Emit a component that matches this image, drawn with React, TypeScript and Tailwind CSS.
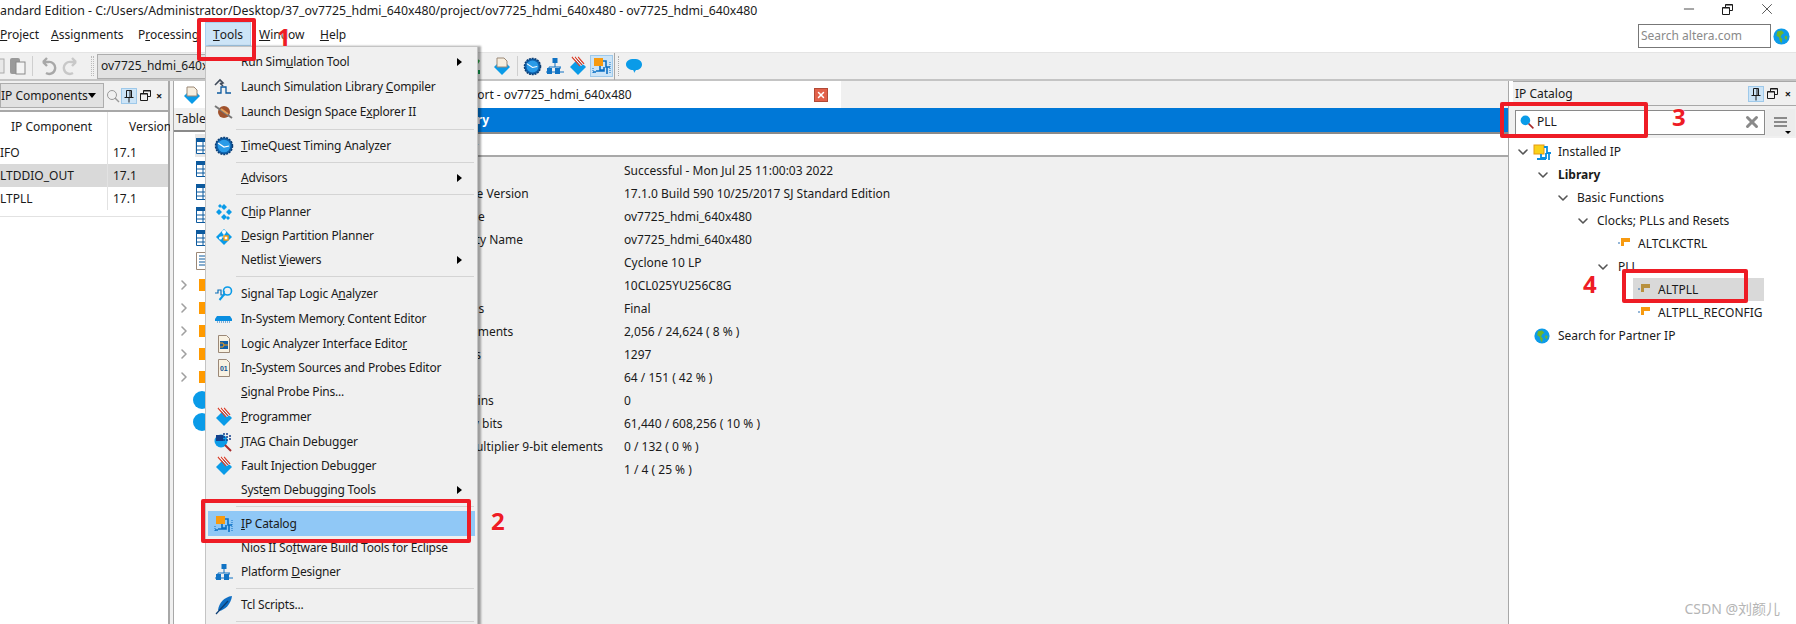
import { ReactNode } from "react";
import { ChevronDown, ChevronRight, Minus, X } from "lucide-react";

// menu text: "&" marks the mnemonic letter
function Label({ text }: { text: string }) {
  const i = text.indexOf("&");
  if (i < 0) return <>{text}</>;
  return (
    <>
      {text.slice(0, i)}
      <u>{text[i + 1]}</u>
      {text.slice(i + 2)}
    </>
  );
}

function Ic({ children, size = 20 }: { children: ReactNode; size?: number }) {
  return (
    <svg width={size} height={size} viewBox="0 0 20 20" className="shrink-0">
      {children}
    </svg>
  );
}

const ClockIcon = ({ size = 20 }: { size?: number }) => (
  <Ic size={size}>
    <circle cx="10" cy="10" r="8.5" fill="#0f5fa8" stroke="#0b3d73" strokeWidth="1.5" strokeDasharray="2 1" />
    <circle cx="10" cy="10" r="6.3" fill="#2a9be8" />
    <path d="M4 7l6 4 5-1" stroke="#fff" strokeWidth="1.2" fill="none" />
  </Ic>
);

const DiamondBase = ({ children }: { children?: ReactNode }) => (
  <Ic>
    <path d="M10 3l8 8-8 8-8-8z" fill="#0a9be8" />
    {children}
  </Ic>
);

const CompileIcon = () => (
  <DiamondBase>
    <path d="M5 2h7l3 3v6H5z" fill="#f6eedf" stroke="#9b8877" />
  </DiamondBase>
);

const ProgrammerIcon = () => (
  <DiamondBase>
    <path d="M4 1l8 9 M7 1l7 8 M10 1l6 7" stroke="#d9442f" strokeWidth="1.3" />
    <path d="M5.5 1l8 9 M8.5 1l7 8" stroke="#fff" strokeWidth="1" />
  </DiamondBase>
);

const HierarchyIcon = () => (
  <Ic>
    <path d="M10 7v4M4 11h12M4 11v2M15 11v2M1 16h18" stroke="#1173c4" strokeWidth="1" fill="none" />
    <rect x="7.5" y="2" width="5" height="5" fill="#1173c4" />
    <rect x="2" y="12" width="5" height="6" fill="#1173c4" />
    <rect x="10" y="12" width="5" height="6" fill="#1173c4" />
  </Ic>
);

const IpIcon = () => (
  <Ic>
    <rect x="2" y="2" width="9" height="8" fill="#f79a10" />
    <path d="M11 5h3v6h4M8 10v4h4v-3M4 15h8v-1M1 16h3M15 18v-7" stroke="#0a6fc4" strokeWidth="1.6" fill="none" />
    <path d="M1 12v6M18 6v12" stroke="#0a6fc4" strokeWidth="1" strokeDasharray="1 1" />
  </Ic>
);

const InstalledIcon = () => (
  <Ic>
    <rect x="1" y="3" width="10" height="9" fill="#f9d21a" stroke="#e59a10" />
    <path d="M11 5h3v6h4M8 12v4h5v-5M4 17h9M16 18v-7" stroke="#0a8ee0" strokeWidth="1.8" fill="none" />
  </Ic>
);

const GlobeIcon = ({ size = 20 }: { size?: number }) => (
  <Ic size={size}>
    <circle cx="10" cy="10" r="9.5" fill="#0d9be8" />
    <path d="M5 4l5-1 3 3-3 2-1 3 2 2-1 5-2-3-1-4-3-2z" fill="#6cb52d" />
    <path d="M14 9l3 1-1 4-2-2z" fill="#6cb52d" />
  </Ic>
);

const SearchBlue = () => (
  <Ic size={16}>
    <circle cx="8" cy="8" r="6" fill="#0a9be8" />
    <path d="M12 12l6 6" stroke="#a82a2a" strokeWidth="2" />
  </Ic>
);

const PinIcon = () => (
  <svg width="14" height="14" viewBox="0 0 14 14" className="shrink-0">
    <path d="M4.5 1.5h5v7h-5zM2.5 8.5h9M7 9v4.5M8 2v6" stroke="#1a1a1a" fill="none" />
  </svg>
);

const RestoreIcon = () => (
  <svg width="11" height="11" viewBox="0 0 11 11" className="shrink-0">
    <path d="M3.5 3V.5h7v6H8M.5 3.5h7v7h-7z" stroke="#1a1a1a" fill="none" />
    <path d="M3.5 1h7M.5 4h7" stroke="#1a1a1a" />
  </svg>
);

const IpBlock = ({ dim }: { dim?: boolean }) => (
  <svg width="12" height="14" viewBox="0 0 12 14" className="shrink-0">
    <path d="M3 1h9v4H6v4H3z" fill={dim ? "#b8913f" : "#f79a10"} />
    <path d="M0 6h2" stroke="#2a6fb0" />
  </svg>
);

const TableIcon = () => (
  <svg width="14" height="16" viewBox="0 0 14 16" className="shrink-0">
    <path d="M.5.5h13v15H.5z" fill="#fff" stroke="#0d5a9e" />
    <path d="M0 0h14v4H0z" fill="#0d5a9e" />
    <path d="M0 8h14M0 12h14M7 4v12" stroke="#0d5a9e" />
  </svg>
);

type MenuRow =
  | { sep: true; h: number }
  | { sep?: false; label: string; h: number; icon?: ReactNode; sub?: boolean; active?: boolean };

const menu: MenuRow[] = [
  { label: "Run Sim&ulation Tool", h: 24, sub: true },
  {
    label: "Launch Simulation Library &Compiler",
    h: 25,
    icon: (
      <Ic>
        <path d="M3 16h4v-6h5v6h5" stroke="#0d5a9e" strokeWidth="1.3" fill="none" />
        <path d="M1 8l5-5 3 3-3 1 M6 6l3 3" stroke="#3f4a5a" strokeWidth="1.6" fill="none" />
      </Ic>
    ),
  },
  {
    label: "Launch Design Space E&xplorer II",
    h: 25,
    icon: (
      <Ic>
        <circle cx="10" cy="10" r="6" fill="#a0522d" />
        <path d="M1 4l17 12" stroke="#777" strokeWidth="2" />
        <path d="M7 7l7 5" stroke="#e8a05a" strokeWidth="2" />
      </Ic>
    ),
  },
  { sep: true, h: 10 },
  { label: "&TimeQuest Timing Analyzer", h: 24, icon: <ClockIcon /> },
  { sep: true, h: 8 },
  { label: "&Advisors", h: 24, sub: true },
  { sep: true, h: 9 },
  {
    label: "C&hip Planner",
    h: 25,
    icon: (
      <Ic>
        <g fill="#0a9be8">
          <path d="M10 2l3 3-3 3-3-3zM5 7l3 3-3 3-3-3zM15 7l3 3-3 3-3-3zM10 12l3 3-3 3-3-3z" />
          <path d="M6 2l2 2-2 2-2-2zM14 14l2 2-2 2-2-2z" />
        </g>
      </Ic>
    ),
  },
  {
    label: "&Design Partition Planner",
    h: 24,
    icon: (
      <DiamondBase>
        <path d="M10 6v5M7 11h6" stroke="#fff" />
        <circle cx="10" cy="6" r="2" fill="#fff" />
        <rect x="10" y="10" width="4" height="4" fill="#fff" stroke="#f79a10" strokeWidth="1.4" />
        <circle cx="6.5" cy="12" r="1.5" fill="#fff" />
      </DiamondBase>
    ),
  },
  { label: "Netlist &Viewers", h: 24, sub: true },
  { sep: true, h: 9 },
  {
    label: "Signal Tap Logic A&nalyzer",
    h: 25,
    icon: (
      <Ic>
        <path d="M1 9h3v-3h3v5h3V7" stroke="#0d6fb8" strokeWidth="1.2" fill="none" />
        <circle cx="13.5" cy="7" r="4" fill="none" stroke="#0a9be8" strokeWidth="1.6" />
        <path d="M10.5 10l-5 6" stroke="#0a9be8" strokeWidth="2" />
      </Ic>
    ),
  },
  {
    label: "In-System Memor&y Content Editor",
    h: 25,
    icon: (
      <Ic>
        <path d="M3 7h13l2 3v2H1v-2z" fill="#0a8ee0" />
        <path d="M3 13h13" stroke="#0a6fc4" strokeDasharray="1 1" />
      </Ic>
    ),
  },
  {
    label: "Logic Analyzer Interface Edito&r",
    h: 25,
    icon: (
      <Ic>
        <path d="M4.5 1.5h8l3 3v14h-11z" fill="#f8f1e2" stroke="#9b8877" />
        <rect x="6" y="7" width="8" height="8" fill="#0f5fa8" />
        <path d="M6 9h3l1 2h4M6 13h3l1-2" stroke="#f79a10" fill="none" />
      </Ic>
    ),
  },
  {
    label: "In&-System Sources and Probes Editor",
    h: 24,
    icon: (
      <Ic>
        <path d="M4.5 1.5h8l3 3v14h-11z" fill="#f8f1e2" stroke="#9b8877" />
        <text x="6" y="13" fontSize="7" fontWeight="700" fill="#0f4f8f" fontFamily="Liberation Sans">01</text>
      </Ic>
    ),
  },
  { label: "&Signal Probe Pins...", h: 24 },
  { label: "&Programmer", h: 25, icon: <ProgrammerIcon /> },
  {
    label: "&JTAG Chain Debugger",
    h: 25,
    icon: (
      <Ic>
        <circle cx="7" cy="9" r="6.5" fill="#0a9be8" />
        <path d="M2 3h7v6H2z" fill="#123f8a" />
        <path d="M10 1v8M13 1v8M16 3v6" stroke="#123f8a" strokeWidth="1.5" strokeDasharray="2 1" />
        <path d="M11 13l6 6" stroke="#a82a2a" strokeWidth="2" />
      </Ic>
    ),
  },
  { label: "Fault Injection Debugger", h: 24, icon: <ProgrammerIcon /> },
  { label: "Syst&em Debugging Tools", h: 24, sub: true },
  { sep: true, h: 9 },
  { label: "&IP Catalog", h: 25, icon: <IpIcon />, active: true },
  { label: "Nios II So&ftware Build Tools for Eclipse", h: 24 },
  { label: "Platform &Designer", h: 24, icon: <HierarchyIcon /> },
  { sep: true, h: 8 },
  {
    label: "Tcl Scripts...",
    h: 25,
    icon: (
      <Ic>
        <path d="M18 1C10 2 5 8 4 15l1 1C11 15 17 9 18 1z" fill="#0f6fc4" />
        <path d="M2 19L14 6" stroke="#0b3d73" strokeWidth="1.2" />
      </Ic>
    ),
  },
  { sep: true, h: 8 },
];

const summary = [
  ["Flow Status", "Successful - Mon Jul 25 11:00:03 2022"],
  ["Quartus Prime Version", "17.1.0 Build 590 10/25/2017 SJ Standard Edition"],
  ["Revision Name", "ov7725_hdmi_640x480"],
  ["Top-level Entity Name", "ov7725_hdmi_640x480"],
  ["Family", "Cyclone 10 LP"],
  ["Device", "10CL025YU256C8G"],
  ["Timing Models", "Final"],
  ["Total logic elements", "2,056 / 24,624 ( 8 % )"],
  ["Total registers", "1297"],
  ["Total pins", "64 / 151 ( 42 % )"],
  ["Total virtual pins", "0"],
  ["Total memory bits", "61,440 / 608,256 ( 10 % )"],
  ["Embedded Multiplier 9-bit elements", "0 / 132 ( 0 % )"],
  ["Total PLLs", "1 / 4 ( 25 % )"],
];

const ipRows = [
  ["IFO", false],
  ["LTDDIO_OUT", true],
  ["LTPLL", false],
] as const;

function TreeChevron({ open }: { open?: boolean }) {
  const Cmp = open ? ChevronDown : ChevronRight;
  return <Cmp size={16} strokeWidth={2.4} className={open ? "text-[#555]" : "text-[#a0a0a0]"} />;
}

function CatalogRow({ indent, children }: { indent: string; children: ReactNode }) {
  return <div className={`h-[23px] flex items-center ${indent}`}>{children}</div>;
}

export default function App() {
  return (
    <div className="relative w-[1796px] h-[624px] overflow-hidden bg-white text-[12px] text-[#1a1a1a] font-['Noto_Sans',sans-serif]">
      {/* title bar */}
      <div className="h-[22px] flex items-center text-[12.3px] whitespace-nowrap">
        <span className="flex-1">
          andard Edition - C:/Users/Administrator/Desktop/37_ov7725_hdmi_640x480/project/ov7725_hdmi_640x480 - ov7725_hdmi_640x480
        </span>
        <div className="flex items-center gap-[25px] pr-[20px] -mt-[4px] text-[#222]">
          <Minus size={16} strokeWidth={1.2} />
          <RestoreIcon />
          <X size={18} strokeWidth={1} />
        </div>
      </div>

      {/* menu bar */}
      <div className="h-[30px] flex items-start">
        <div className="flex items-center h-[26px]">
          <span className="w-[51px]">
            <u>P</u>roject
          </span>
          <span className="w-[87px]">
            <u>A</u>ssignments
          </span>
          <span className="w-[67px]">
            P<u>r</u>ocessing
          </span>
          <span className="w-[46px] h-[24px] -mt-[2px] pt-[1px] flex items-center justify-center bg-[#cce4f7] border border-[#a8d0f0]">
            <u>T</u>ools
          </span>
          <span className="ml-[8px] w-[61px]">
            <u>W</u>indow
          </span>
          <span>
            <u>H</u>elp
          </span>
        </div>
        <div className="ml-auto flex items-center gap-[2px] pr-[6px] mt-[2px]">
          <div className="w-[133px] h-[24px] border border-[#777] flex items-center px-[2px] text-[#8a8a8a] text-[12px]">
            Search altera.com
          </div>
          <GlobeIcon size={17} />
        </div>
      </div>

      {/* toolbar */}
      <div className="h-[29px] bg-[#f0f0f0] border-t border-[#e4e4e4] border-b-2 border-b-[#c4c4c4] flex items-center">
        <svg width="30" height="20" viewBox="0 0 30 20" className="shrink-0">
          <rect x="-4" y="3" width="8" height="14" fill="#e8e8e8" stroke="#aaa" />
          <rect x="10" y="2" width="10" height="16" rx="2" fill="#9a9a9a" />
          <rect x="16" y="6" width="9" height="12" fill="#f4f4f4" stroke="#8a8a8a" />
        </svg>
        <div className="ml-[2px] w-px h-[20px] bg-[#cfcfcf]" />
        <svg width="50" height="20" viewBox="0 0 50 20" className="ml-[5px] shrink-0">
          <path d="M5 6l4-4M5 6l4 4M5 6h5a6 6 0 1 1-2 11" stroke="#a8a8a8" strokeWidth="2.4" fill="none" />
          <path d="M38 6l-4-4M38 6l-4 4M38 6h-5a6 6 0 1 0 2 11" stroke="#c8c8c8" strokeWidth="2.4" fill="none" />
        </svg>
        <div className="ml-[3px] w-[3px] h-[20px] border-x border-dotted border-[#bbb]" />
        <div className="ml-[3px] w-[140px] h-[25px] bg-[#e1e1e1] border border-[#adadad] flex items-center pl-[3px] whitespace-nowrap overflow-hidden">
          ov7725_hdmi_640x480
        </div>
        <div className="ml-[232px] flex items-center gap-[3px]">
          <svg width="20" height="20" viewBox="0 0 20 20" className="shrink-0">
            <path d="M4 13l6-9" stroke="#2fae4a" strokeWidth="2.5" fill="none" />
            <rect x="3" y="14" width="8" height="4" fill="#12a150" />
          </svg>
          <CompileIcon />
          <div className="mx-[2px] w-px h-[20px] bg-[#cfcfcf]" />
          <ClockIcon size={19} />
          <HierarchyIcon />
          <ProgrammerIcon />
          <div className="-ml-[1px] w-[23px] h-[22px] flex items-center justify-center bg-[#cce4f7] border border-[#9ec9ea]">
            <IpIcon />
          </div>
          <div className="-ml-[2px] w-px h-[27px] bg-[#a8a8a8]" />
          <div className="w-[3px] h-[20px] border-l border-dotted border-[#aaa]" />
          <svg width="20" height="20" viewBox="0 0 20 20" className="shrink-0">
            <path d="M10 3c5 0 8 2 8 5.500s-3 5.500-6 5.500l-2 3c0-1 0-2-1-3-3 0-7-2-7-5.500s3-5.500 8-5.500z" fill="#0a9be8" />
          </svg>
        </div>
      </div>

      {/* body */}
      <div className="h-[543px] flex">
        {/* IP components panel */}
        <div className="w-[170px] shrink-0 border-r-2 border-[#a8a8a8] flex flex-col">
          <div className="h-[31px] bg-[#f0f0f0] border-b-2 border-[#a8a8a8] flex items-center">
            <div className="w-[104px] h-[25px] bg-[#e1e1e1] border border-[#adadad] flex items-center justify-between pr-[7px] whitespace-nowrap">
              <span>IP Components</span>
              <span className="w-0 h-0 border-x-[4px] border-x-transparent border-t-[5px] border-t-black" />
            </div>
            <svg width="14" height="14" viewBox="0 0 14 14" className="ml-[2px] shrink-0">
              <circle cx="6" cy="6" r="4.500" stroke="#999" fill="none" />
              <path d="M9 9l4 4" stroke="#999" strokeWidth="1.500" />
            </svg>
            <div className="ml-[1px] w-[16px] h-[16px] bg-[#cce4f7] border border-[#9ec9ea] flex items-center justify-center">
              <PinIcon />
            </div>
            <div className="ml-[3px]">
              <RestoreIcon />
            </div>
            <span className="ml-[5px] text-[11px] font-bold leading-none">×</span>
          </div>
          <div className="h-[29px] flex items-center">
            <span className="w-[108px] border-r border-[#e2e2e2] h-full flex items-center pl-[11px] shrink-0">
              IP Component
            </span>
            <span className="pl-[21px]">Version</span>
          </div>
          <div className="border-b border-[#e2e2e2] pb-[6px]">
            {ipRows.map(([name, selected]) => (
              <div key={name} className={`h-[23px] flex items-center ${selected ? "bg-[#d9d9d9]" : ""}`}>
                <span className="w-[108px] shrink-0 border-r border-[#e2e2e2] h-full flex items-center">{name}</span>
                <span className="pl-[5px]">17.1</span>
              </div>
            ))}
          </div>
        </div>

        <div className="w-[3px] shrink-0 bg-[#f0f0f0]" />

        {/* compilation report */}
        <div className="w-[1336px] shrink-0 border-x border-[#a8a8a8] flex flex-col">
          <div className="h-[27px] flex bg-[#f0f0f0] shrink-0">
            <div className="w-[667px] bg-white flex items-center pl-[8px] shrink-0">
              <CompileIcon />
              <span className="ml-[182px] whitespace-nowrap">Compilation Report - ov7725_hdmi_640x480</span>
              <span className="ml-auto w-[14px] h-[14px] mr-[13px] bg-[#e2614a] border border-[#b24a36] flex items-center justify-center">
                <X size={10} strokeWidth={3.5} className="text-white" />
              </span>
            </div>
          </div>
          <div className="flex-1 flex min-h-0">
            <div className="w-[215px] shrink-0 flex flex-col">
              <div className="h-[24px] bg-[#f0f0f0] border-b-2 border-[#8a8a8a] flex items-center pl-[2px] shrink-0">
                Table of Contents
              </div>
              <div className="pt-[2px] pl-[21px]">
                <div className="h-[23px] flex items-center pl-[1px] bg-[#e6e6e6]">
                  <TableIcon />
                </div>
                {[0, 1, 2, 3].map((i) => (
                  <div key={i} className="h-[23px] flex items-center pl-[1px]">
                    <TableIcon />
                  </div>
                ))}
                <div className="h-[24px] flex items-center pl-[1px]">
                  <svg width="14" height="18" viewBox="0 0 14 18" className="shrink-0">
                    <path d="M.5.5h13v17H.5z" fill="#fff" stroke="#9b8877" />
                    <path d="M3 4h8M3 7h8M3 10h8M3 13h8" stroke="#0d5a9e" />
                  </svg>
                </div>
              </div>
              <div className="pl-[2px]">
                {[0, 1, 2, 3, 4].map((i) => (
                  <div key={i} className="h-[23px] flex items-center">
                    <TreeChevron />
                    <span className="ml-[7px] w-[18px] h-[12px] bg-[#ff9a00]" />
                  </div>
                ))}
              </div>
              <div className="pl-[19px] pt-[1px]">
                {[0, 1].map((i) => (
                  <div key={i} className="h-[22px] flex items-center">
                    <span className="w-[18px] h-[18px] rounded-full bg-[#0a9be8]" />
                  </div>
                ))}
              </div>
            </div>
            <div className="flex-1 bg-[#f0f0f0] flex flex-col">
              <div className="h-[24px] bg-[#0078d7] text-white font-bold flex items-center pl-[12px] shrink-0">
                Flow Summary
              </div>
              <div className="h-[25px] bg-white border-y-2 border-t-[#8a8a8a] border-b-[#a8a8a8] flex items-center pl-[34px] text-[#9a9a9a] shrink-0">
                &lt;&lt;Filter&gt;&gt;
              </div>
              <div className="pt-[2px] pl-[12px]">
                {summary.map(([k, v]) => (
                  <div key={k} className="h-[23px] flex items-center">
                    <span className="w-[223px] shrink-0 whitespace-nowrap">{k}</span>
                    <span>{v}</span>
                  </div>
                ))}
              </div>
            </div>
          </div>
        </div>

        {/* IP catalog */}
        <div className="flex-1 flex flex-col min-w-0 pl-[4px]">
          <div className="h-[25px] bg-[#f0f0f0] border-y border-[#a8a8a8] flex items-center pl-[2px] shrink-0">
            <span className="flex-1">IP Catalog</span>
            <div className="w-[16px] h-[16px] bg-[#cce4f7] border border-[#9ec9ea] flex items-center justify-center">
              <PinIcon />
            </div>
            <div className="ml-[3px]">
              <RestoreIcon />
            </div>
            <span className="ml-[7px] mr-[5px] text-[11px] font-bold leading-none">×</span>
          </div>
          <div className="h-[32px] -ml-[4px] pl-[6px] bg-[#f0f0f0] flex items-center shrink-0">
            <div className="w-[250px] h-[25px] bg-white border border-[#8a8a8a] flex items-center pl-[3px]">
              <SearchBlue />
              <span className="ml-[2px]">PLL</span>
              <X size={18} strokeWidth={4} className="ml-auto mr-[3px] text-[#8a8a8a]" />
            </div>
            <div className="relative ml-[1px] w-[29px] h-[27px] bg-[#ececec] flex flex-col items-center justify-center gap-[2px]">
              <span className="w-[13px] border-t-2 border-[#8a8a8a]" />
              <span className="w-[13px] border-t-2 border-[#8a8a8a]" />
              <span className="w-[13px] border-t-2 border-[#8a8a8a]" />
              <span className="absolute right-[4px] bottom-[2px] w-0 h-0 border-x-[3px] border-x-transparent border-t-[3px] border-t-black" />
            </div>
          </div>
          <div className="-ml-[4px] pt-[2px]">
            <CatalogRow indent="pl-[6px]">
              <TreeChevron open />
              <span className="ml-[2px]">
                <InstalledIcon />
              </span>
              <span className="ml-[5px]">Installed IP</span>
            </CatalogRow>
            <CatalogRow indent="pl-[26px]">
              <TreeChevron open />
              <span className="ml-[7px] font-bold">Library</span>
            </CatalogRow>
            <CatalogRow indent="pl-[46px]">
              <TreeChevron open />
              <span className="ml-[6px]">Basic Functions</span>
            </CatalogRow>
            <CatalogRow indent="pl-[66px]">
              <TreeChevron open />
              <span className="ml-[6px]">Clocks; PLLs and Resets</span>
            </CatalogRow>
            <CatalogRow indent="pl-[109px]">
              <IpBlock />
              <span className="ml-[8px]">ALTCLKCTRL</span>
            </CatalogRow>
            <CatalogRow indent="pl-[86px]">
              <TreeChevron open />
              <span className="ml-[7px]">PLL</span>
            </CatalogRow>
            <div className="ml-[124px] w-[131px] h-[23px] bg-[#d9d9d9] flex items-center pl-[5px]">
              <IpBlock dim />
              <span className="ml-[8px]">ALTPLL</span>
            </div>
            <CatalogRow indent="pl-[129px]">
              <IpBlock />
              <span className="ml-[8px]">ALTPLL_RECONFIG</span>
            </CatalogRow>
            <CatalogRow indent="pl-[25px]">
              <GlobeIcon size={16} />
              <span className="ml-[8px]">Search for Partner IP</span>
            </CatalogRow>
          </div>
        </div>
      </div>

      {/* open Tools menu */}
      <div className="absolute left-[205px] top-[46px] w-[273px] h-[590px] bg-[#f0f0f0] border border-[#c4c4c4] shadow-[3px_0_2px_rgba(0,0,0,0.35)] pt-[3px] tracking-[-0.2px]">
        {menu.map((row, i) =>
          row.sep ? (
            <div key={i} style={{ height: row.h }} className="flex items-center pl-[30px] pr-[3px]">
              <div className="w-full h-px bg-[#d4d4d4]" />
            </div>
          ) : (
            <div
              key={i}
              style={{ height: row.h }}
              className={`relative flex items-center whitespace-nowrap mx-[2px] pl-[3px] ${row.active ? "bg-[#90c8f6]" : ""}`}
            >
              <span className="w-[28px] flex justify-center shrink-0 -ml-[1px]">{row.icon}</span>
              <span className="ml-[3px]">
                <Label text={row.label} />
              </span>
              {row.sub && (
                <span className="absolute right-[13px] w-0 h-0 border-y-[4px] border-y-transparent border-l-[5px] border-l-black" />
              )}
            </div>
          ),
        )}
      </div>

      {/* red annotations */}
      <div className="absolute left-[197px] top-[18px] w-[59px] h-[43px] border-[4px] border-[#ee1c25] rounded-[2px]" />
      <div className="absolute left-[201px] top-[499px] w-[270px] h-[44px] border-[4px] border-[#ee1c25] rounded-[2px]" />
      <div className="absolute left-[1500px] top-[102px] w-[148px] h-[36px] border-[4px] border-[#ee1c25] rounded-[2px]" />
      <div className="absolute left-[1622px] top-[269px] w-[126px] h-[34px] border-[4px] border-[#ee1c25] rounded-[2px]" />
      <span className="absolute left-[277px] top-[23px] text-[24px] leading-[28px] font-bold text-[#ee1c25] [text-shadow:0_0_2px_#fff]">1</span>
      <span className="absolute left-[491px] top-[507px] text-[24px] leading-[28px] font-bold text-[#ee1c25] [text-shadow:0_0_2px_#fff]">2</span>
      <span className="absolute left-[1672px] top-[103px] text-[24px] leading-[28px] font-bold text-[#ee1c25] [text-shadow:0_0_2px_#fff]">3</span>
      <span className="absolute left-[1583px] top-[270px] text-[24px] leading-[28px] font-bold text-[#ee1c25] [text-shadow:0_0_2px_#fff]">4</span>

      {/* watermark */}
      <span className="absolute right-[16px] top-[598px] text-[14px] text-[#b5b5b5] font-['Noto_Sans','Noto_Sans_CJK_SC',sans-serif]">
        CSDN @刘颜儿
      </span>
    </div>
  );
}
